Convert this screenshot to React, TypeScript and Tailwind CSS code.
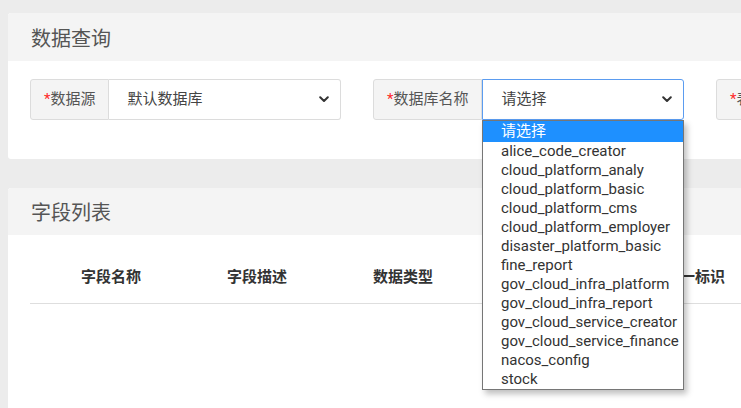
import React from "react";

const options = [
  "请选择",
  "alice_code_creator",
  "cloud_platform_analy",
  "cloud_platform_basic",
  "cloud_platform_cms",
  "cloud_platform_employer",
  "disaster_platform_basic",
  "fine_report",
  "gov_cloud_infra_platform",
  "gov_cloud_infra_report",
  "gov_cloud_service_creator",
  "gov_cloud_service_finance",
  "nacos_config",
  "stock",
];

function Chevron() {
  return (
    <svg width="10" height="7" viewBox="0 0 10 7" className="shrink-0">
      <path d="M1.2 1.2 L5 5 L8.8 1.2" fill="none" stroke="#333" strokeWidth="2" strokeLinecap="round" strokeLinejoin="round" />
    </svg>
  );
}

function Group({
  label,
  value,
  focused,
}: {
  label: string;
  value: string;
  focused?: boolean;
}) {
  return (
    <div className="flex h-[41px] w-[311px] shrink-0">
      <div className="flex shrink-0 items-center rounded-l-[3px] border border-[#dcdcdc] bg-[#f4f4f4] px-[13px] text-[15px] text-[#555]">
        <span className="text-[#ff2a2a]">*</span>
        {label}
      </div>
      <div
        className={`flex flex-1 items-center justify-between rounded-r-[3px] border pl-[18px] pr-[11px] text-[15px] text-[#444] ${
          focused ? "border-[#5b9cf0]" : "border-l-0 border-[#dcdcdc]"
        }`}
      >
        <span>{value}</span>
        <Chevron />
      </div>
    </div>
  );
}

export default function App() {
  const cols = ["字段名称", "字段描述", "数据类型", "是否为空", "唯一标识"];
  return (
    <div
      className="relative h-[408px] w-[741px] overflow-hidden bg-[#ececec] pl-2 pt-[13px] leading-none"
      style={{ fontFamily: 'Roboto, "Noto Sans CJK SC", sans-serif' }}
    >
      <div className="w-[1000px] overflow-hidden rounded-[3px] bg-white">
        <div className="flex h-[48px] items-center bg-[#f4f4f4] pl-[23px] pt-[3px] text-[20px] text-[#555]">
          数据查询
        </div>
        <div className="flex h-[98px] gap-[32px] pl-[22px] pt-[18px]">
          <Group label="数据源" value="默认数据库" />
          <Group label="数据库名称" value="请选择" focused />
          <Group label="表名称" value="请选择" />
        </div>
      </div>

      <div className="mt-[29px] h-[300px] w-[1000px] overflow-hidden rounded-[3px] bg-white">
        <div className="flex h-[47px] items-center bg-[#f4f4f4] pl-[23px] pt-[3px] text-[20px] text-[#555]">
          字段列表
        </div>
        <div className="pl-[22px] pr-[20px] pt-[16px]">
          <div className="flex h-[53px] items-center border-b border-[#dedede] pl-2">
            {cols.map((c) => (
              <div key={c} className="w-[146px] shrink-0 text-center text-[15px] font-bold text-[#333]">
                {c}
              </div>
            ))}
          </div>
        </div>
      </div>

      <div className="absolute left-[482px] top-[120px] w-[202px] border border-[#767676] bg-white shadow-[3px_4px_6px_rgba(0,0,0,0.25)]">
        {options.map((o, i) => (
          <div
            key={o}
            className={`flex h-[19px] items-center pl-[18px] text-[15px] ${
              i === 0 ? "h-[21px] bg-[#1e90ff] text-white" : "text-[#333]"
            }`}
          >
            {o}
          </div>
        ))}
      </div>
    </div>
  );
}
